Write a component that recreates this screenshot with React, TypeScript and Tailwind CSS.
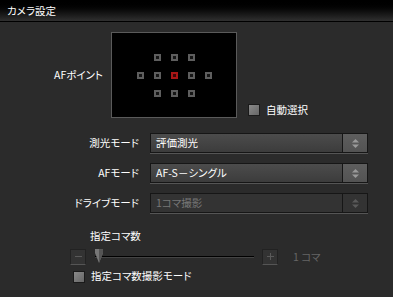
import React from "react";

const font = {
  fontFamily: '"Noto Sans CJK JP", "Liberation Sans", sans-serif',
};

function Updown({ dim }: { dim?: boolean }) {
  return (
    <svg width="9" height="11" viewBox="0 0 9 11">
      <path d="M4.5 1 L8 4.5 H1 Z" fill={dim ? "#5a5a5a" : "#9a9a9a"} />
      <path d="M4.5 10 L8 6.5 H1 Z" fill={dim ? "#5a5a5a" : "#9a9a9a"} />
    </svg>
  );
}

function Dropdown({ label, value, disabled }: { label: string; value: string; disabled?: boolean }) {
  return (
    <div className="flex items-center">
      <div className="w-[140px] text-right text-[10.5px] text-white pr-[1px] leading-none">{label}</div>
      <div className="ml-[10px] w-[218px] border-b border-[#555]">
        <div
          className={
            "flex h-[20px] border border-[#161616] " +
            (disabled ? "bg-[#333]" : "bg-gradient-to-b from-[#4c4c4c] to-[#3c3c3c]")
          }
        >
          <div className={"flex-1 flex items-center pl-[5px] text-[10.5px] " + (disabled ? "text-[#777]" : "text-white")}>
            {value}
          </div>
          <div
            className={
              "w-[25px] flex items-center justify-center border-l border-[#161616] " +
              (disabled ? "bg-[#333]" : "bg-gradient-to-b from-[#5e5e5e] to-[#535353]")
            }
          >
            <Updown dim={disabled} />
          </div>
        </div>
      </div>
    </div>
  );
}

function Pt({ red }: { red?: boolean }) {
  return (
    <div
      className={
        "w-[7px] h-[7px] border-2 " +
        (red ? "border-[#a81616] bg-[#3a0606]" : "border-[#5e5e5e] bg-[#151515]")
      }
    />
  );
}

function Check({ label }: { label: string }) {
  return (
    <div className="flex items-center gap-[6px]">
      <div className="w-[12px] h-[12px] border border-[#1a1a1a] bg-gradient-to-br from-[#8a8a8a] to-[#666]" />
      <span className="text-[10.5px] text-white leading-none">{label}</span>
    </div>
  );
}

export default function App() {
  return (
    <div className="w-[393px] h-[297px] bg-[#2b2b2b] overflow-hidden [font-feature-settings:'palt']" style={font}>
      <div className="h-[22px] bg-gradient-to-b from-[#000] to-[#303030] border-b border-black flex items-center pl-[7px]">
        <span className="text-[10.5px] text-white">カメラ設定</span>
      </div>

      <div className="flex items-end pt-[10px]">
        <div className="w-[111px] self-center flex justify-end pr-[8px] text-[10.5px] text-white leading-none">AFポイント</div>
        <div className="w-[126px] h-[86px] border border-[#5a5a5a] bg-black flex flex-col items-center justify-center gap-[11px]">
          <div className="flex gap-[10px]">
            <Pt /><Pt /><Pt />
          </div>
          <div className="flex gap-[10px]">
            <Pt /><Pt /><Pt red /><Pt /><Pt />
          </div>
          <div className="flex gap-[10px]">
            <Pt /><Pt /><Pt />
          </div>
        </div>
        <div className="ml-[11px] mb-[2px]">
          <Check label="自動選択" />
        </div>
      </div>

      <div className="mt-[15px] flex flex-col gap-[9px]">
        <Dropdown label="測光モード" value="評価測光" />
        <Dropdown label="AFモード" value="AF-S－シングル" />
        <Dropdown label="ドライブモード" value="1コマ撮影" disabled />
      </div>

      <div className="pl-[90px] mt-[17px] text-[10.5px] text-white leading-none">指定コマ数</div>

      <div className="flex items-center pl-[70px] mt-[7px]">
        <div className="w-[16px] h-[16px] bg-[#333] border border-[#222] border-b-[#555] flex items-center justify-center">
          <div className="w-[7px] h-[1px] bg-[#5a5a5a]" />
        </div>
        <div className="relative ml-[9px] w-[159px] h-[16px] flex items-center">
          <div className="w-full h-[2px] bg-black border-b border-[#444]" />
          <svg className="absolute left-0 top-0" width="8" height="14" viewBox="0 0 8 14">
            <path d="M0 0 H8 V4 L4 14 L0 4 Z" fill="#777" />
            <path d="M4 0 H8 V4 L4 14 Z" fill="#555" />
          </svg>
        </div>
        <div className="ml-[8px] w-[16px] h-[16px] bg-[#333] border border-[#222] border-b-[#555] flex items-center justify-center relative">
          <div className="w-[7px] h-[1px] bg-[#5a5a5a]" />
          <div className="absolute w-[1px] h-[7px] bg-[#5a5a5a]" />
        </div>
        <span className="ml-[15px] text-[10.5px] text-[#666]">1 コマ</span>
      </div>

      <div className="pl-[73px] mt-[6px]">
        <Check label="指定コマ数撮影モード" />
      </div>
    </div>
  );
}
